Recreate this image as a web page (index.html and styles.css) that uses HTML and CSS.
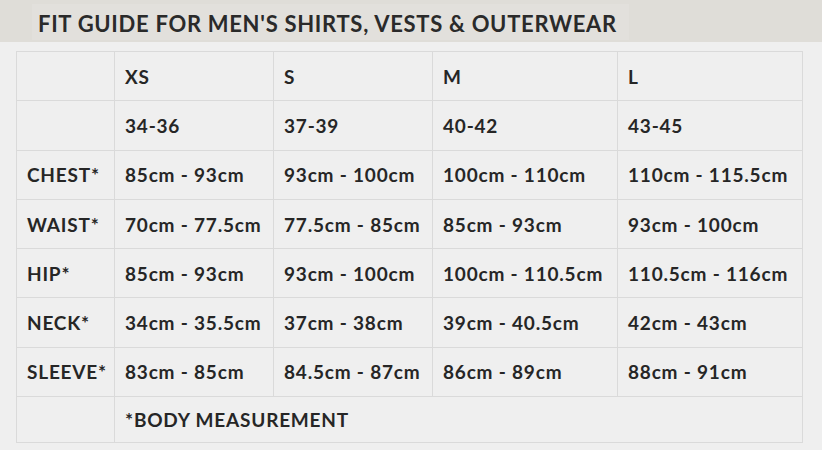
FILE: index.html
```html
<!DOCTYPE html>
<html>
<head>
<meta charset="utf-8">
<link rel="stylesheet" href="styles.css">
</head>
<body>
<div class="band">
  <h1 class="title">FIT GUIDE FOR MEN'S SHIRTS, VESTS &amp; OUTERWEAR</h1>
</div>
<div class="wrap">
<table class="fit">
  <colgroup>
    <col class="c0"><col class="c1"><col class="c2"><col class="c3"><col class="c4">
  </colgroup>
  <tr><td></td><td>XS</td><td>S</td><td>M</td><td>L</td></tr>
  <tr><td></td><td>34-36</td><td>37-39</td><td>40-42</td><td>43-45</td></tr>
  <tr><td>CHEST*</td><td>85cm - 93cm</td><td>93cm - 100cm</td><td>100cm - 110cm</td><td>110cm - 115.5cm</td></tr>
  <tr><td>WAIST*</td><td>70cm - 77.5cm</td><td>77.5cm - 85cm</td><td>85cm - 93cm</td><td>93cm - 100cm</td></tr>
  <tr><td>HIP*</td><td>85cm - 93cm</td><td>93cm - 100cm</td><td>100cm - 110.5cm</td><td>110.5cm - 116cm</td></tr>
  <tr><td>NECK*</td><td>34cm - 35.5cm</td><td>37cm - 38cm</td><td>39cm - 40.5cm</td><td>42cm - 43cm</td></tr>
  <tr><td>SLEEVE*</td><td>83cm - 85cm</td><td>84.5cm - 87cm</td><td>86cm - 89cm</td><td>88cm - 91cm</td></tr>
  <tr><td></td><td colspan="4">*BODY MEASUREMENT</td></tr>
</table>
</div>
</body>
</html>
```

FILE: styles.css
```css
html, body {
  margin: 0;
  padding: 0;
  background: #efefef;
  width: 822px;
  height: 450px;
  overflow: hidden;
  font-family: "Lato", "Liberation Sans", sans-serif;
  color: #262626;
}
.band {
  height: 42px;
  background: #dfddd8;
  padding: 4px 0 0 32px;
  box-sizing: border-box;
}
.title {
  margin: 0;
  display: inline-block;
  height: 36px;
  line-height: 40px;
  padding: 0 12px 0 6px;
  background: #e2e0dc;
  font-size: 22px;
  font-weight: 700;
  color: #2a2a2a;
  letter-spacing: 0.7px;
}
.wrap {
  padding: 9px 0 0 16px;
}
.fit {
  border-collapse: collapse;
  table-layout: fixed;
  width: 786px;
}
.c0 { width: 98px; }
.c1 { width: 159px; }
.c2 { width: 159px; }
.c3 { width: 185px; }
.c4 { width: 185px; }
.fit td {
  border: 1px solid #dadada;
  height: 49.3px;
  padding: 0 0 0 10px;
  box-sizing: border-box;
  font-size: 19px;
  font-weight: 700;
  letter-spacing: 0.8px;
  white-space: nowrap;
  vertical-align: middle;
}
.fit tr:last-child td {
  height: 46px;
}
```
